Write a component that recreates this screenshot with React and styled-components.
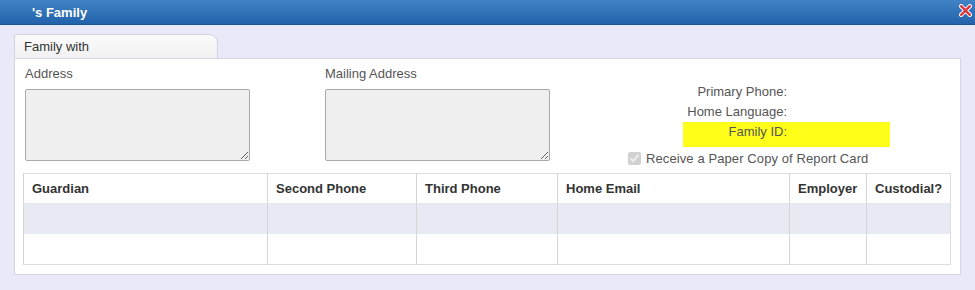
import React from 'react'
import styled, { createGlobalStyle } from 'styled-components'

const GlobalStyle = createGlobalStyle`
	html, body {
		margin: 0;
		padding: 0;
		background: #e9e9fa;
		font-family: "Liberation Sans", Arial, sans-serif;
	}
`

const columns = [
	{ title: 'Guardian', width: 244 },
	{ title: 'Second Phone', width: 149 },
	{ title: 'Third Phone', width: 141 },
	{ title: 'Home Email', width: 232 },
	{ title: 'Employer', width: 77 },
	{ title: 'Custodial?', width: 84 },
]

const App = () => (
	<Dialog>
		<GlobalStyle />
		<TitleBar>
			<Title>'s Family</Title>
			<CloseIcon viewBox="0 0 12 12">
				<path d="M2 2 L10 10 M10 2 L2 10" stroke="#fff" strokeWidth="4" strokeLinecap="round" />
				<path d="M2 2 L10 10 M10 2 L2 10" stroke="#d9363e" strokeWidth="2.2" strokeLinecap="round" />
			</CloseIcon>
		</TitleBar>
		<Body>
			<Tab>Family with</Tab>
			<Panel>
				<TopArea>
					<Field>
						<Label>Address</Label>
						<TextBox readOnly />
					</Field>
					<Field>
						<Label>Mailing Address</Label>
						<TextBox readOnly />
					</Field>
					<InfoColumn>
						<InfoGrid>
							<InfoRow>
								<InfoLabel>Primary Phone:</InfoLabel>
								<span />
							</InfoRow>
							<InfoRow>
								<InfoLabel>Home Language:</InfoLabel>
								<span />
							</InfoRow>
							<InfoRow highlight>
								<InfoLabel>Family ID:</InfoLabel>
								<span />
							</InfoRow>
						</InfoGrid>
						<CheckRow>
							<input type="checkbox" checked disabled readOnly />
							Receive a Paper Copy of Report Card
						</CheckRow>
					</InfoColumn>
				</TopArea>
				<Table>
					<colgroup>
						{columns.map(c => <col key={c.title} style={{ width: c.width }} />)}
					</colgroup>
					<thead>
						<tr>
							{columns.map(c => <Th key={c.title}>{c.title}</Th>)}
						</tr>
					</thead>
					<tbody>
						<Row shaded>
							{columns.map(c => <Td key={c.title} />)}
						</Row>
						<Row>
							{columns.map(c => <Td key={c.title} />)}
						</Row>
					</tbody>
				</Table>
			</Panel>
		</Body>
	</Dialog>
)

const Dialog = styled.div`
	width: 975px;
	height: 290px;
	background: #e9e9fa;
	overflow: hidden;
`

const TitleBar = styled.div`
	height: 24px;
	display: flex;
	align-items: center;
	justify-content: space-between;
	padding: 0 3px 0 32px;
	background: linear-gradient(to bottom, #4283c6, #2262ab);
	border-bottom: 1px solid #1c559a;
`

const Title = styled.span`
	color: #fff;
	font-size: 13px;
	font-weight: bold;
`

const CloseIcon = styled.svg`
	width: 13px;
	height: 13px;
	margin-top: -4px;
`

const Body = styled.div`
	padding: 9px 14px 0 14px;
`

const Tab = styled.div`
	width: 193px;
	height: 23px;
	padding-left: 9px;
	display: flex;
	align-items: center;
	font-size: 13px;
	color: #333;
	background: linear-gradient(to bottom, #fbfbfb, #f1f1f1);
	border: 1px solid #d2d2de;
	border-bottom: none;
	border-radius: 3px 9px 0 0;
`

const Panel = styled.div`
	width: 945px;
	background: #fff;
	border: 1px solid #d6d6e2;
	padding: 7px 0 9px 0;
`

const TopArea = styled.div`
	display: grid;
	grid-template-columns: 300px 300px 1fr;
	padding-left: 9px;
`

const Field = styled.div`
	display: flex;
	flex-direction: column;
	gap: 7px;
`

const Label = styled.div`
	font-size: 13px;
	line-height: 16px;
	color: #555;
	padding-left: 1px;
`

const TextBox = styled.textarea`
	width: 223px;
	height: 70px;
	margin: 0 0 0 1px;
	padding: 0;
	background: #efefef;
	border: 1px solid #a9a9a9;
	border-radius: 2px;
	resize: both;
	outline: none;
`

const InfoColumn = styled.div`
	padding-top: 16px;
	padding-left: 4px;
`

const InfoGrid = styled.div`
	margin-left: 55px;
	width: 207px;
	display: flex;
	flex-direction: column;
`

const InfoRow = styled.div`
	display: grid;
	grid-template-columns: 104px 103px;
	height: ${props => (props.highlight ? '25px' : '20px')};
	background: ${props => (props.highlight ? '#ffff1a' : 'transparent')};
	align-items: ${props => (props.highlight ? 'start' : 'center')};
	padding-top: ${props => (props.highlight ? '2px' : '0')};
	box-sizing: border-box;
`

const InfoLabel = styled.span`
	text-align: right;
	font-size: 13px;
	line-height: 16px;
	color: #555;
`

const CheckRow = styled.label`
	height: 22px;
	display: flex;
	align-items: center;
	gap: 5px;
	font-size: 13px;
	letter-spacing: 0.1px;
	color: #555;

	input {
		width: 13px;
		height: 13px;
		margin: 0;
	}
`

const Table = styled.table`
	margin: 4px 10px 0 8px;
	width: 927px;
	table-layout: fixed;
	border-collapse: collapse;
	border: 1px solid #dcdcdc;
`

const Th = styled.th`
	height: 29px;
	padding: 0 0 0 8px;
	text-align: left;
	font-size: 13px;
	font-weight: bold;
	color: #333;
	border-left: 1px solid #d6d6d6;
	border-bottom: 1px solid #e6e6ee;
`

const Row = styled.tr`
	background: ${props => (props.shaded ? '#e8eaf3' : '#fff')};
`

const Td = styled.td`
	height: 30px;
	padding: 0;
	border-left: 1px solid #d6d6d6;
`

export default App
